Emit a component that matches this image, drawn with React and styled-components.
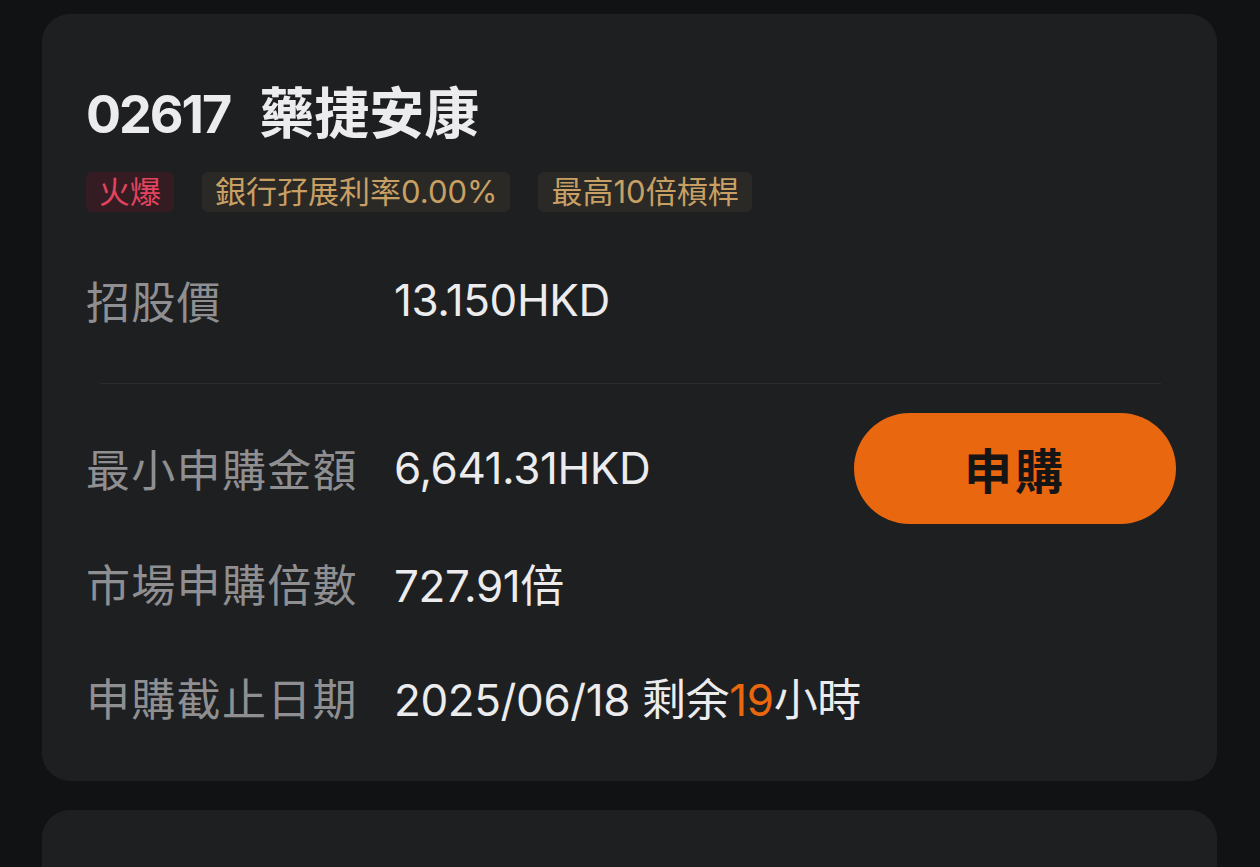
import { createGlobalStyle, styled } from "styled-components";

const GlobalStyle = createGlobalStyle`
  html, body {
    margin: 0;
    padding: 0;
    background: #111214;
  }
  body {
    font-family: Inter, "Noto Sans CJK TC", sans-serif;
    -webkit-font-smoothing: antialiased;
  }
`;

const Page = styled.div`
  padding: 14px 43px 0 42px;
  display: flex;
  flex-direction: column;
  gap: 29px;
  height: 867px;
  overflow: hidden;
  box-sizing: border-box;
`;

const Card = styled.section`
  background: #1e1f21;
  border-radius: 28px;
  padding: 69px 41px 27px 44px;
  flex-shrink: 0;
  min-height: ${(p) => (p.$empty ? "200px" : "auto")};
`;

const Title = styled.h1`
  margin: 0;
  height: 60px;
  font-size: 52px;
  line-height: 60px;
  font-weight: 700;
  color: #ececee;
  display: flex;
  align-items: baseline;
  gap: 29px;
`;

const Code = styled.span`
  letter-spacing: -2px;
`;

const Name = styled.span`
  font-size: 55px;
`;

const Tags = styled.div`
  display: flex;
  gap: 28px;
  margin-top: 29px;
`;

const Tag = styled.span`
  height: 40px;
  line-height: 40px;
  padding: 0 13px;
  border-radius: 6px;
  font-size: 31px;
  background: ${(p) => (p.$hot ? "#341c22" : "#2a2926")};
  color: ${(p) => (p.$hot ? "#e2445f" : "#c9a064")};
`;

const Row = styled.div`
  display: flex;
  align-items: center;
  height: 114px;
  margin-top: ${(p) => p.$top || 0}px;
`;

const Label = styled.span`
  width: 308px;
  flex-shrink: 0;
  font-size: 44px;
  color: #8f8f92;
  letter-spacing: 1.3px;
`;

const Value = styled.span`
  flex: 1;
  font-size: 44px;
  color: #ececee;
  letter-spacing: -0.4px;
`;

const Accent = styled.span`
  color: #e8670f;
`;

const Divider = styled.hr`
  margin: 26px 15px 0 14px;
  border: none;
  height: 1px;
  background: #2b2c2e;
`;

const ApplyButton = styled.button`
  width: 322px;
  height: 111px;
  border: none;
  border-radius: 56px;
  background: #e8670f;
  color: #151515;
  font-family: "Noto Sans CJK TC", sans-serif;
  font-size: 48px;
  font-weight: 700;
  letter-spacing: 3px;
  cursor: pointer;
`;

export default function App() {
  return (
    <>
      <GlobalStyle />
      <Page>
        <Card>
          <Title>
            <Code>02617</Code>
            <Name>藥捷安康</Name>
          </Title>
          <Tags>
            <Tag $hot>火爆</Tag>
            <Tag>銀行孖展利率0.00%</Tag>
            <Tag>最高10倍槓桿</Tag>
          </Tags>
          <Row $top={31}>
            <Label>招股價</Label>
            <Value>13.150HKD</Value>
          </Row>
          <Divider />
          <Row $top={27}>
            <Label>最小申購金額</Label>
            <Value>6,641.31HKD</Value>
            <ApplyButton>申購</ApplyButton>
          </Row>
          <Row $top={1}>
            <Label>市場申購倍數</Label>
            <Value>727.91倍</Value>
          </Row>
          <Row>
            <Label>申購截止日期</Label>
            <Value>
              2025/06/18 剩余<Accent>19</Accent>小時
            </Value>
          </Row>
        </Card>
        <Card $empty />
      </Page>
    </>
  );
}
